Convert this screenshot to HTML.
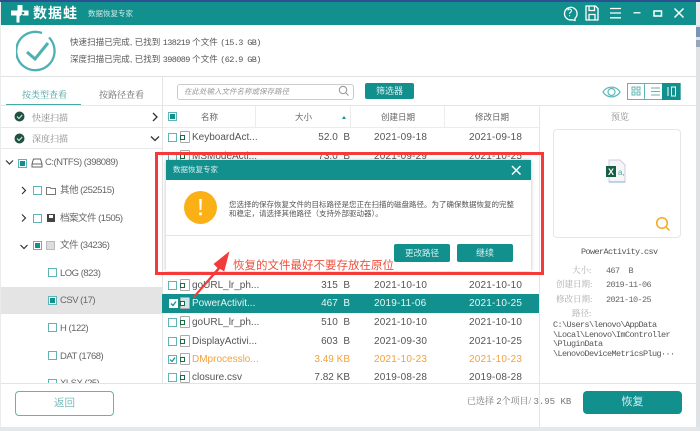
<!DOCTYPE html>
<html><head><meta charset="utf-8">
<style>
html,body{margin:0;padding:0;background:#fff}
#p{position:relative;width:700px;height:431px;overflow:hidden;background:#e9ecee;font-family:"Liberation Sans","Noto Sans CJK SC",sans-serif;color:#555;filter:blur(.25px)}
#p div{position:absolute;white-space:nowrap}
.s{font-family:"Liberation Serif","Noto Serif CJK SC",serif}
.m{font-family:"Liberation Mono","Noto Sans CJK SC",monospace}
.cb{width:7px;height:7px;border:1px solid #5fb5b5;background:#fff}
.cb.on::after{content:"";position:absolute;left:1px;top:1px;width:5px;height:5px;background:#12908e}
.t{font-size:9.500px;letter-spacing:-.5px;line-height:14px;color:#666}
.r{left:163px;width:376px;height:18.5px}
.fi{width:8px;height:10px;border:1px solid #aaa;background:#fff;border-radius:1px}
.fi::after{content:"";position:absolute;left:-1px;top:3px;width:3px;height:3px;border:1.500px solid #1c6b45;background:#fff}
.n{font-size:10px;line-height:20px;left:29px;top:0}
.sz{font-size:10px;line-height:20px;right:189px;top:0}
.d{font-size:10px;line-height:20px;letter-spacing:.2px}
.head{font-size:8.500px;line-height:14px;color:#666}
.bt{background:#12908e;color:#d8eeee;font-size:8.500px;text-align:center;border-radius:2px}
.l{font-size:8.500px;line-height:12px;color:#aaa}
.v{font-size:8.500px;letter-spacing:-.6px;line-height:12px;color:#666}
.sm{font-size:8.500px;letter-spacing:-.6px}
</style></head>
<body><div id="p">
<div style="left:0;top:0;width:700px;height:2px;background:#2c4f92"></div>
<div style="left:696px;top:25px;width:4px;height:406px;background:#dfe3e6"></div>
<div style="left:696px;top:27px;width:4px;height:10px;background:#7d93b5"></div>
<div style="left:696px;top:40px;width:4px;height:7px;background:#9aa5b5"></div>
<div style="left:0;top:427px;width:700px;height:4px;background:#e4e8ea"></div>

<!-- window -->
<div style="left:1px;top:2px;width:695px;height:425px;background:#fff"></div>
<div style="left:1px;top:2px;width:695px;height:23px;background:#12908e"></div>
<svg style="position:absolute;left:10px;top:4px" width="20" height="20" viewBox="0 0 20 20"><path d="M7.500 1h5v5.500H18.500v5H13l-1-1-2.500 2v6h-3v-7H1v-5h6.500z" fill="#fff"/><circle cx="13" cy="9" r="1.300" fill="#12908e"/></svg>
<div style="left:33px;top:3px;font-size:14px;line-height:20px;font-weight:700;color:#fff;letter-spacing:1px">数据蛙</div>
<div style="left:88px;top:7px;font-size:7.500px;line-height:13px;color:#cfe8e8">数据恢复专家</div>
<svg style="position:absolute;left:560px;top:3px" width="136" height="20" viewBox="0 0 136 20" fill="none" stroke="#fff" stroke-width="1.300">
<path d="M12 16.800A6.300 6.300 0 1 1 15 15.300V17.500z"/>
<path d="M7.800 7.500a1.800 1.800 0 1 1 2.800 1.700c-.8.500-1 .9-1 1.700M9.600 12.300v1" stroke-width="1.100"/>
<path d="M26 3h9.500l2.500 2.500V17H26zM29 3v4.500h5.500V3M29 17v-5.500h6V17"/>
<path d="M50 5.500h11M50 10h11M50 14.800h11"/>
<path d="M73.500 9.800h7"/>
<path d="M94 8h7.500v5H94z" stroke-width="1.500"/>
<path d="M114.500 5.500l9 9M123.500 5.500l-9 9" stroke-width="1.500"/>
</svg>

<!-- scan summary -->
<svg style="position:absolute;left:16px;top:30px" width="42" height="42" viewBox="0 0 42 42" fill="none" stroke="#4fb0b3"><path d="M33 7.500A19.200 19.200 0 1 1 26 3" stroke-width="2.300"/><path d="M11 22l8 7 13-16" stroke-width="3"/></svg>
<div style="left:70px;top:36px;font-size:8.500px;line-height:13px;color:#555;letter-spacing:.05px">快速扫描已完成, 已找到 <span class="m sm">138219</span> 个文件 <span class="m sm">(15.3 GB)</span></div>
<div style="left:70px;top:53px;font-size:8.500px;line-height:13px;color:#555;letter-spacing:.05px">深度扫描已完成, 已找到 <span class="m sm">398089</span> 个文件 <span class="m sm">(62.9 GB)</span></div>
<div style="left:1px;top:76px;width:695px;height:1px;background:#e2e2e2"></div>

<!-- left tabs -->
<div class="s" style="left:22px;top:88px;font-size:9px;line-height:14px;color:#3c9c9c">按类型查看</div>
<div class="s" style="left:99px;top:88px;font-size:9px;line-height:14px;color:#666">按路径查看</div>
<div style="left:6px;top:104px;width:75px;height:2px;background:#49a8a8"></div>
<div style="left:1px;top:105px;width:161px;height:1px;background:#e8e8e8"></div>
<div style="left:162px;top:77px;width:1px;height:306px;background:#e4e4e4"></div>

<!-- scans -->
<svg style="position:absolute;left:14px;top:111px" width="11" height="11"><circle cx="5.500" cy="5.500" r="5" fill="#24503f"/><path d="M3 5.500l2 2 3.200-3.500" stroke="#cfe" fill="none"/></svg>
<div class="s" style="left:32px;top:111px;font-size:9px;line-height:14px;color:#888">快速扫描</div>
<svg style="position:absolute;left:151px;top:112px" width="8" height="11" fill="none" stroke="#333" stroke-width="1.300"><path d="M2 1l4 4-4 4"/></svg>
<div style="left:1px;top:127px;width:161px;height:1px;background:#e8e8e8"></div>
<svg style="position:absolute;left:14px;top:133px" width="11" height="11"><circle cx="5.500" cy="5.500" r="5" fill="#24503f"/><path d="M3 5.500l2 2 3.200-3.500" stroke="#cfe" fill="none"/></svg>
<div class="s" style="left:32px;top:132px;font-size:9px;line-height:14px;color:#888">深度扫描</div>
<svg style="position:absolute;left:150px;top:135px" width="11" height="8" fill="none" stroke="#333" stroke-width="1.300"><path d="M1 1.500l4 4 4-4"/></svg>
<div style="left:1px;top:148px;width:161px;height:1px;background:#e8e8e8"></div>

<!-- tree -->
<svg style="position:absolute;left:0;top:150px" width="60" height="110" fill="none" stroke="#333" stroke-width="1.200">
<path d="M6 10.500l3.500 3.500 3.500-3.500"/><path d="M22 37l3.500 3.500-3.500 3.500"/><path d="M22 64.500l3.500 3.500-3.500 3.500"/><path d="M20.500 95l3.500 3.500 3.500-3.500"/>
</svg>
<div class="cb on" style="left:18px;top:159px"></div>
<svg style="position:absolute;left:31px;top:158px" width="12" height="10" fill="none" stroke="#666"><path d="M2.500 1h7l1.500 5v3H1V6z"/><path d="M1 6h10"/></svg>
<div class="t" style="left:45px;top:156px">C:(NTFS) (398089)</div>
<div class="cb" style="left:33px;top:186px"></div>
<svg style="position:absolute;left:46px;top:186px" width="10" height="9" fill="none" stroke="#777"><path d="M.5 1.500h3.500l1 1h4.500v6h-9z"/></svg>
<div class="t" style="left:60px;top:184px">其他 (252515)</div>
<div class="cb" style="left:33px;top:214px"></div>
<svg style="position:absolute;left:46px;top:213px" width="10" height="10"><path d="M1 1h8v8H1z" fill="#444"/><path d="M3 2h4v3H3z" fill="#fff"/></svg>
<div class="t" style="left:60px;top:212px">档案文件 (1505)</div>
<div class="cb on" style="left:33px;top:241px"></div>
<div style="left:46px;top:241px;width:7px;height:7px;border:1px solid #bbb;background:#ddd"></div>
<div class="t" style="left:60px;top:239px">文件 (34236)</div>
<div class="cb" style="left:48px;top:268px"></div>
<div class="t" style="left:60px;top:267px">LOG (823)</div>
<div style="left:1px;top:287px;width:161px;height:27px;background:#e4e4e4"></div>
<div class="cb on" style="left:48px;top:296px"></div>
<div class="t" style="left:60px;top:294px">CSV (17)</div>
<div class="cb" style="left:48px;top:323px"></div>
<div class="t" style="left:60px;top:322px">H (122)</div>
<div class="cb" style="left:48px;top:351px"></div>
<div class="t" style="left:60px;top:350px">DAT (1768)</div>
<div style="left:1px;top:375px;width:161px;height:8px;overflow:hidden"><div class="cb" style="left:47px;top:4px"></div><div class="t" style="left:59px;top:2px">XLSX (25)</div></div>

<!-- search bar -->
<div style="left:177px;top:84px;width:175px;height:14px;border:1px solid #ccc;border-radius:3px;background:#fff"></div>
<div style="left:184px;top:85px;font-size:7.500px;line-height:13px;font-style:italic;color:#999">在此处输入文件名称或保存路径</div>
<svg style="position:absolute;left:338px;top:85px" width="12" height="12" fill="none" stroke="#999" stroke-width="1.100"><circle cx="5" cy="5" r="3.700"/><path d="M8 8l2.500 2.500"/></svg>
<div class="bt" style="left:365px;top:83px;width:49px;height:16px;line-height:16px;font-size:9px">筛选器</div>
<svg style="position:absolute;left:602px;top:85px" width="20" height="14" fill="none" stroke="#5db8bb" stroke-width="1.200"><path d="M1 7c4-6.500 13-6.500 17 0-4 6.500-13 6.500-17 0z"/><circle cx="9.500" cy="7" r="3.500"/></svg>
<div style="left:627px;top:83px;width:52px;height:15px;border:1px solid #5fb5b5;background:#fff"></div>
<div style="left:644px;top:83px;width:1px;height:16px;background:#5fb5b5"></div>
<div style="left:662px;top:83px;width:18px;height:17px;background:#12908e"></div>
<svg style="position:absolute;left:627px;top:83px" width="53" height="17" fill="none"><path d="M5 4h3v3H5zM10 4h3v3h-3zM5 9h3v3H5zM10 9h3v3h-3z" stroke="#5fb5b5"/><path d="M24 5h9M24 8.500h9M24 12h9" stroke="#5fb5b5"/><path d="M41 4v9M44.500 4h4v9h-4z" stroke="#fff"/></svg>

<div style="left:163px;top:105px;width:533px;height:1px;background:#e6e6e6"></div>
<!-- table header -->
<div class="cb on" style="left:168px;top:112px"></div>
<div class="head" style="left:201px;top:110px">名称</div>
<div class="head" style="left:295px;top:110px">大小</div>
<div style="left:342px;top:116px;width:0;height:0;border-left:2.500px solid transparent;border-right:2.500px solid transparent;border-bottom:3px solid #12908e"></div>
<div class="head" style="left:381px;top:110px">创建日期</div>
<div class="head" style="left:475px;top:110px">修改日期</div>
<div style="left:255px;top:106px;width:1px;height:21px;background:#ececec"></div>
<div style="left:350px;top:106px;width:1px;height:21px;background:#ececec"></div>
<div style="left:444px;top:106px;width:1px;height:21px;background:#ececec"></div>
<div style="left:539px;top:106px;width:1px;height:321px;background:#e6e6e6"></div>
<div style="left:163px;top:127px;width:376px;height:1px;background:#ececec"></div>

<!-- rows -->
<div class="r" style="top:128px"><div class="cb" style="left:5px;top:5px"></div><div class="fi" style="left:17px;top:3px"></div><div class="n">KeyboardAct...</div><div class="sz">52.0&nbsp; B</div><div class="d" style="left:211px;top:0">2021-09-18</div><div class="d" style="left:306px;top:0">2021-09-18</div></div>
<div class="r" style="top:146.500px;height:13.500px;overflow:hidden"><div class="cb" style="left:5px;top:5px"></div><div class="fi" style="left:17px;top:3px"></div><div class="n">MSModeActi...</div><div class="sz">73.0&nbsp; B</div><div class="d" style="left:211px;top:0">2021-09-29</div><div class="d" style="left:306px;top:0">2021-10-25</div></div>

<div class="r" style="top:276px"><div class="cb" style="left:5px;top:5px"></div><div class="fi" style="left:17px;top:3px"></div><div class="n">goURL_lr_ph...</div><div class="sz">315&nbsp; B</div><div class="d" style="left:211px;top:0">2021-10-10</div><div class="d" style="left:306px;top:0">2021-10-10</div></div>

<div style="left:162px;top:294px;width:377px;height:19px;background:#12908e"></div>
<div class="r" style="top:294px;color:#e8f5f5"><div class="cb" style="left:6px;top:5px;border-color:#fff"></div><svg style="position:absolute;left:7px;top:6px" width="7" height="7" fill="none" stroke="#12908e" stroke-width="1.300"><path d="M1 3.500l2 2 3-4"/></svg><div class="fi" style="left:17px;top:3px;background:#cfe6e6"></div><div class="n">PowerActivit...</div><div class="sz">467&nbsp; B</div><div class="d" style="left:211px;top:0">2019-11-06</div><div class="d" style="left:306px;top:0">2021-10-25</div></div>

<div class="r" style="top:313px"><div class="cb" style="left:5px;top:5px"></div><div class="fi" style="left:17px;top:3px"></div><div class="n">goURL_lr_ph...</div><div class="sz">510&nbsp; B</div><div class="d" style="left:211px;top:0">2021-10-10</div><div class="d" style="left:306px;top:0">2021-10-10</div></div>
<div class="r" style="top:331.500px"><div class="cb" style="left:5px;top:5px"></div><div class="fi" style="left:17px;top:3px"></div><div class="n">DisplayActivi...</div><div class="sz">603&nbsp; B</div><div class="d" style="left:211px;top:0">2021-09-30</div><div class="d" style="left:306px;top:0">2021-10-25</div></div>
<div class="r" style="top:350px;color:#f5a13a"><div class="cb" style="left:5px;top:5px"></div><svg style="position:absolute;left:6px;top:6px" width="7" height="7" fill="none" stroke="#12908e" stroke-width="1.200"><path d="M1 3.500l2 2 3-4"/></svg><div class="fi" style="left:17px;top:3px"></div><div class="n">DMprocesslo...</div><div class="sz">3.49 KB</div><div class="d" style="left:211px;top:0">2021-10-23</div><div class="d" style="left:306px;top:0">2021-10-23</div></div>
<div class="r" style="top:368px;height:15px;overflow:hidden"><div class="cb" style="left:5px;top:5px"></div><div class="fi" style="left:17px;top:3px"></div><div class="n">closure.csv</div><div class="sz">7.82 KB</div><div class="d" style="left:211px;top:0">2019-08-28</div><div class="d" style="left:306px;top:0">2019-08-28</div></div>

<div style="left:1px;top:383px;width:695px;height:1px;background:#e4e4e4"></div>

<!-- preview -->
<div class="s" style="left:611px;top:110px;font-size:9px;line-height:14px;color:#888">预览</div>
<div style="left:553px;top:129px;width:126px;height:107px;border:1px solid #e6e6e6;border-radius:4px;background:#fff"></div>
<svg style="position:absolute;left:605px;top:158px" width="22" height="26"><path d="M4 2h11l5 5v17H4z" fill="#f4f6f7" stroke="#ccd"/><path d="M4 24h16" stroke="#8aa8d0"/><path d="M1 8h10v11H1z" fill="#155f44"/><text x="6" y="17" font-size="9" font-weight="700" fill="#fff" text-anchor="middle" font-family="Liberation Sans">X</text><text x="13" y="17" font-size="8" fill="#4aa" font-family="Liberation Sans">a,</text></svg>
<svg style="position:absolute;left:655px;top:216px" width="16" height="16" fill="none" stroke="#f5a623" stroke-width="1.500"><circle cx="7" cy="7" r="5.300"/><path d="M11 11l3.500 3.500"/></svg>
<div class="m v" style="left:581px;top:246px;color:#555">PowerActivity.csv</div>
<div class="s l" style="left:572px;top:264px">大小:</div>
<div class="m v" style="left:606px;top:265px">467&nbsp; B</div>
<div class="s l" style="left:556px;top:278px">创建日期:</div>
<div class="m v" style="left:606px;top:279px">2019-11-06</div>
<div class="s l" style="left:556px;top:293px">修改日期:</div>
<div class="m v" style="left:606px;top:294px">2021-10-25</div>
<div class="s l" style="left:572px;top:307px">路径:</div>
<div class="m v" style="left:553px;top:321px;line-height:9.600px;color:#555">C:\Users\lenovo\AppData<br>\Local\Lenovo\ImController<br>\PluginData<br>\LenovoDeviceMetricsPlug···</div>

<!-- footer -->
<div style="left:15px;top:391px;width:97px;height:23px;border:1px solid #5fb5b5;border-radius:4px;background:#fff;color:#7bbcbc;font-size:10.500px;line-height:23px;text-align:center">返回</div>
<div class="s" style="left:467px;top:395px;font-size:9px;line-height:13px;color:#777">已选择 <span class="m">2</span>个项目/ <span class="m">3.95 KB</span></div>
<div class="bt" style="left:583px;top:391px;width:99px;height:23px;line-height:23px;font-size:11px;border-radius:4px">恢复</div>

<!-- dialog -->
<div style="left:166px;top:160px;width:365px;height:111px;background:#fff;box-shadow:0 0 4px rgba(0,0,0,.25)"></div>
<div style="left:166px;top:160px;width:365px;height:20px;background:#12908e"></div>
<div style="left:173px;top:164px;font-size:7.500px;line-height:12px;color:#d8eeee">数据恢复专家</div>
<svg style="position:absolute;left:511px;top:165px" width="11" height="11" fill="none" stroke="#fff" stroke-width="1.500"><path d="M1 1l8.500 8.500M9.500 1L1 9.500"/></svg>
<svg style="position:absolute;left:184px;top:191px" width="33" height="33"><circle cx="16.500" cy="16.500" r="16.500" fill="#fbb016"/><path d="M15.200 8h2.600l-.4 11h-1.800zM15.200 21.500h2.600v2.800h-2.600z" fill="#fff"/></svg>
<div style="left:229px;top:199.500px;font-size:7.500px;line-height:9.500px;color:#555">您选择的保存恢复文件的目标路径是您正在扫描的磁盘路径。为了确保数据恢复的完整<br>和稳定，请选择其他路径（支持外部驱动器）。</div>
<div style="left:166px;top:235px;width:365px;height:1px;background:#e4e4e4"></div>
<div class="bt" style="left:394px;top:244px;width:56px;height:18px;line-height:18px">更改路径</div>
<div class="bt" style="left:457px;top:244px;width:56px;height:18px;line-height:18px;font-size:9px">继续</div>

<!-- annotation -->
<div style="left:155px;top:152px;width:383px;height:117px;border:3px solid #f63a3a"></div>
<svg style="position:absolute;left:185px;top:248px" width="50" height="54"><path d="M8 49L33 20l-4-4L44 4l-5 19-4-2.500L9 50z" fill="#f23b3b" stroke="#f23b3b" stroke-width=".6"/></svg>
<div style="left:233px;top:258px;font-size:11.500px;line-height:16px;color:#f0503c">恢复的文件最好不要存放在原位</div>
</div></body></html>
